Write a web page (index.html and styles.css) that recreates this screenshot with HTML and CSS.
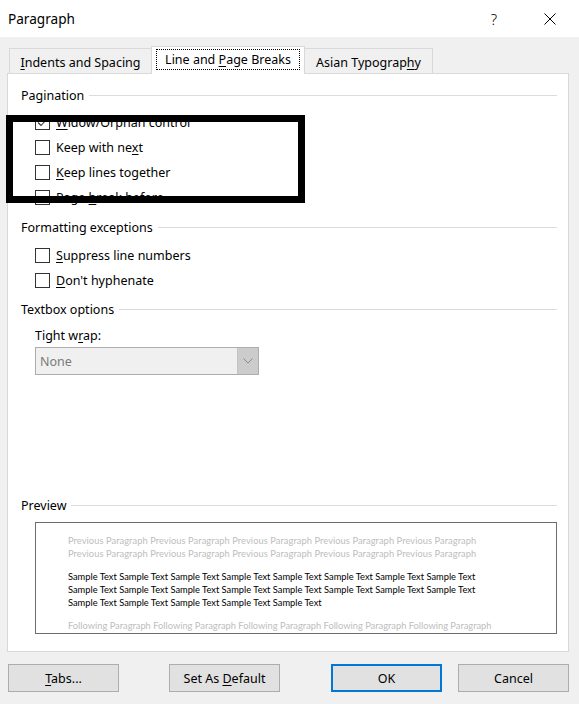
FILE: index.html
```html
<!DOCTYPE html>
<html lang="en">
<head>
<meta charset="utf-8">
<title>Paragraph</title>
<link rel="stylesheet" href="styles.css">
</head>
<body>
<div class="titlebar">
  <span class="title">Paragraph</span>
  <span class="help">?</span>
  <span class="close"><svg width="12" height="12" viewBox="0 0 12 12"><path d="M0.5 0.5 L11.5 11.5 M11.5 0.5 L0.5 11.5" stroke="#000" stroke-width="1" fill="none"/></svg></span>
</div>
<div class="tabs">
  <div class="tab tab-indents"><span><u>I</u>ndents and Spacing</span></div>
  <div class="tab tab-active"><span class="focus"><span>Line and <u>P</u>age Breaks</span></span></div>
  <div class="tab tab-asian"><span>Asian Typograp<u>h</u>y</span></div>
</div>
<div class="panel">
  <div class="head head-first"><span>Pagination</span></div>
  <div class="checks checks-first">
    <div class="row"><span class="box"><svg width="13" height="13" viewBox="0 0 13 13"><path d="M2 6.5 L5 9.5 L11 3" stroke="#333" stroke-width="1.1" fill="none"/></svg></span><span class="lbl"><u>W</u>idow/Orphan control</span></div>
    <div class="row"><span class="box"></span><span class="lbl">Keep with ne<u>x</u>t</span></div>
    <div class="row"><span class="box"></span><span class="lbl"><u>K</u>eep lines together</span></div>
    <div class="row"><span class="box"></span><span class="lbl">Page <u>b</u>reak before</span></div>
  </div>
  <div class="head head-fmt"><span>Formatting exceptions</span></div>
  <div class="checks checks-fmt">
    <div class="row"><span class="box"></span><span class="lbl"><u>S</u>uppress line numbers</span></div>
    <div class="row"><span class="box"></span><span class="lbl"><u>D</u>on't hyphenate</span></div>
  </div>
  <div class="head head-tb"><span>Textbox options</span></div>
  <div class="wrap-label">Tight w<u>r</u>ap:</div>
  <div class="select">
    <span class="select-value">None</span>
    <span class="select-btn"><svg width="10" height="6" viewBox="0 0 10 6"><path d="M0.5 0.5 L5 5 L9.5 0.5" stroke="#8c8c8c" stroke-width="1" fill="none"/></svg></span>
  </div>
  <div class="head head-prev"><span>Preview</span></div>
  <div class="preview">
    <div class="pl faint prev">Previous Paragraph Previous Paragraph Previous Paragraph Previous Paragraph Previous Paragraph</div>
    <div class="pl faint prev">Previous Paragraph Previous Paragraph Previous Paragraph Previous Paragraph Previous Paragraph</div>
    <div class="pl sample first-sample">Sample Text Sample Text Sample Text Sample Text Sample Text Sample Text Sample Text Sample Text</div>
    <div class="pl sample">Sample Text Sample Text Sample Text Sample Text Sample Text Sample Text Sample Text Sample Text</div>
    <div class="pl sample">Sample Text Sample Text Sample Text Sample Text Sample Text</div>
    <div class="pl faint following">Following Paragraph Following Paragraph Following Paragraph Following Paragraph Following Paragraph</div>
  </div>
</div>
<div class="buttons">
  <div class="btn-group left-group">
    <div class="btn"><span><u>T</u>abs...</span></div>
    <div class="btn"><span>Set As <u>D</u>efault</span></div>
  </div>
  <div class="btn-group right-group">
    <div class="btn btn-default"><span>OK</span></div>
    <div class="btn"><span>Cancel</span></div>
  </div>
</div>
<div class="highlight"></div>
</body>
</html>
```
FILE: styles.css
```css
* { box-sizing: border-box; }
html, body { margin: 0; padding: 0; }
body {
  width: 579px;
  height: 704px;
  background: #f0f0f0;
  font-family: "Noto Sans", "Open Sans", sans-serif;
  font-size: 12.5px;
  color: #000;
  position: relative;
  overflow: hidden;
}
u { text-decoration: underline; text-underline-offset: 2px; text-decoration-thickness: 1px; }

.titlebar {
  height: 37px;
  background: #fff;
  display: flex;
  align-items: center;
  padding-left: 8px;
  padding-right: 23px;
}
.title { flex: 1; font-size: 13.6px; }
.help { width: 16px; text-align: center; font-size: 15px; font-weight: 300; margin-right: -2px; }
.close { margin-left: 44px; width: 12px; height: 12px; display: flex; }

.tabs {
  height: 36px;
  display: flex;
  align-items: flex-end;
  padding-left: 9px;
}
.tab {
  height: 25px;
  border: 1px solid #d9d9d9;
  border-bottom: none;
  display: flex;
  align-items: center;
  justify-content: center;
  background: #f0f0f0;
  padding-top: 2px;
}
.tab-indents { width: 143px; margin-right: -1px; }
.tab-asian { width: 129px; margin-left: -1px; }
.tab-active {
  width: 154px;
  height: 28px;
  margin-bottom: -1px;
  background: #fff;
  position: relative;
  z-index: 1;
  padding: 2px 4px 4px;
  align-items: stretch;
}
.focus {
  flex: 1;
  border: 1px dotted #000;
  display: flex;
  align-items: center;
  justify-content: center;
}

.panel {
  margin-left: 7px;
  width: 562px;
  height: 579px;
  background: #fff;
  border: 1px solid #d9d9d9;
  padding: 0 11px 0 13px;
}
.head {
  display: flex;
  align-items: center;
  line-height: 17px;
  height: 17px;
}
.head::after {
  content: "";
  flex: 1;
  height: 1px;
  background: #dcdcdc;
  margin-left: 5px;
}
.head-first { margin-top: 13px; }
.head-fmt { margin-top: 9px; }
.head-tb { margin-top: 8px; }
.head-prev { margin-top: 122px; }

.checks-first { margin-top: 6px; }
.checks-fmt { margin-top: 7px; }
.row {
  height: 25px;
  display: flex;
  align-items: center;
  padding-left: 14px;
}
.box {
  width: 15px;
  height: 15px;
  border: 1px solid #333;
  background: #fff;
  display: flex;
  align-items: center;
  justify-content: center;
}
.lbl { margin-left: 6px; }

.wrap-label {
  margin-top: 9px;
  margin-left: 14px;
  line-height: 17px;
}
.select {
  margin-top: 3px;
  margin-left: 14px;
  width: 224px;
  height: 28px;
  border: 1px solid #adadad;
  background: #f0f0f0;
  display: flex;
  align-items: stretch;
}
.select-value {
  flex: 1;
  color: #7a7a7a;
  padding-left: 4px;
  display: flex;
  align-items: center;
}
.select-btn {
  width: 21px;
  background: #cccccc;
  border-left: 1px solid #c4c4c4;
  display: flex;
  align-items: center;
  justify-content: center;
}

.preview {
  margin-top: 8px;
  margin-left: 14px;
  height: 112px;
  border: 1px solid #6d6d6d;
  padding: 11px 0 0 32px;
  font-family: "Lato", "Liberation Sans", sans-serif;
  font-size: 9.3px;
  overflow: hidden;
}
.pl { line-height: 13px; height: 13px; white-space: nowrap; }
.faint { color: #bdbdbd; }
.prev { letter-spacing: 0.065px; }
.sample { color: #000; }
.first-sample { margin-top: 10px; }
.following { margin-top: 10px; }

.buttons {
  margin-top: 12px;
  display: flex;
  justify-content: space-between;
  padding: 0 10px 0 8px;
}
.btn-group { display: flex; }
.left-group { gap: 50px; }
.right-group { gap: 16px; }
.btn {
  width: 111px;
  height: 28px;
  background: #e1e1e1;
  border: 1px solid #adadad;
  display: flex;
  align-items: center;
  justify-content: center;
}
.btn-default { border: 2px solid #0078d7; }

.highlight {
  position: absolute;
  left: 6px;
  top: 115px;
  width: 299px;
  height: 88px;
  border: 7px solid #000;
}
```
